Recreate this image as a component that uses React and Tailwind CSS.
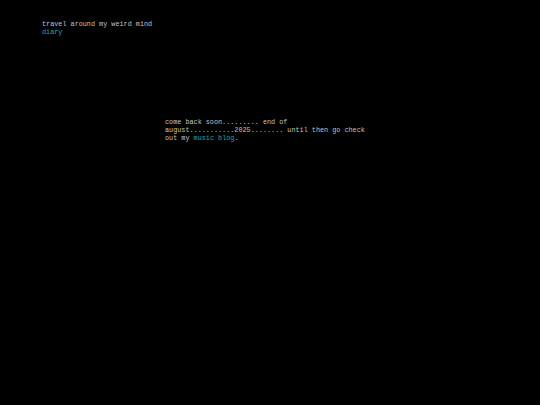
export default function App() {
  return (
    <div className="min-h-screen bg-black text-[#c4c4c4] font-['Liberation_Mono',monospace] text-[6.8px] leading-[8px]">
      <header className="pl-[42px] pt-[20px]">
        <p>travel around my weird mind</p>
        <a href="#" className="text-[#2aa7a7]">diary</a>
      </header>

      <main className="mx-auto mt-[82px] w-[210px]">
        <p>
          come back soon......... end of august...........2025........ until then go check out my{' '}
          <a href="#" className="text-[#2aa7a7]">music blog</a>.
        </p>
      </main>
    </div>
  );
}
